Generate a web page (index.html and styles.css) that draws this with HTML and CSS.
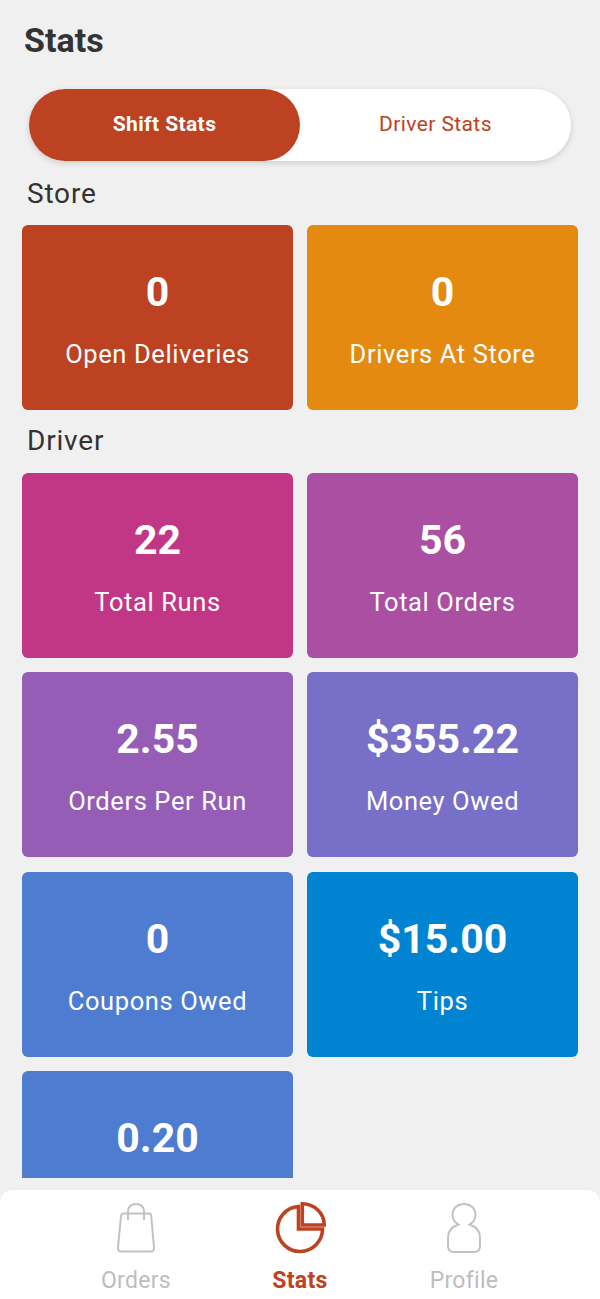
FILE: index.html
```html
<!DOCTYPE html>
<html lang="en">

<head>
    <meta charset="UTF-8">
    <meta name="viewport" content="width=device-width, initial-scale=1.0">
    <title>Stats</title>
    <link rel="stylesheet" href="styles.css">
</head>

<body>
    <main class="content">
        <h1 class="page-title">Stats</h1>

        <div class="toggle">
            <button class="toggle-btn active">Shift Stats</button>
            <button class="toggle-btn">Driver Stats</button>
        </div>

        <h2 class="section-title">Store</h2>
        <div class="tiles">
            <div class="tile tile-red">
                <div class="tile-value">0</div>
                <div class="tile-label">Open Deliveries</div>
            </div>
            <div class="tile tile-orange">
                <div class="tile-value">0</div>
                <div class="tile-label">Drivers At Store</div>
            </div>
        </div>

        <h2 class="section-title section-driver">Driver</h2>
        <div class="tiles">
            <div class="tile tile-pink">
                <div class="tile-value">22</div>
                <div class="tile-label">Total Runs</div>
            </div>
            <div class="tile tile-magenta">
                <div class="tile-value">56</div>
                <div class="tile-label">Total Orders</div>
            </div>
            <div class="tile tile-purple">
                <div class="tile-value">2.55</div>
                <div class="tile-label">Orders Per Run</div>
            </div>
            <div class="tile tile-violet">
                <div class="tile-value">$355.22</div>
                <div class="tile-label">Money Owed</div>
            </div>
            <div class="tile tile-blue">
                <div class="tile-value">0</div>
                <div class="tile-label">Coupons Owed</div>
            </div>
            <div class="tile tile-sky">
                <div class="tile-value">$15.00</div>
                <div class="tile-label">Tips</div>
            </div>
            <div class="tile tile-blue">
                <div class="tile-value">0.20</div>
            </div>
        </div>
    </main>

    <nav class="tabbar">
        <div class="tab">
            <svg class="tab-icon" width="40" height="52" viewBox="0 0 40 52" fill="none" stroke="#c2c2c2" stroke-width="2">
                <path d="M8 11.5H33Q35 11.5 35.2 14L38 45.5Q38.3 49.5 34.5 49.5H5.5Q1.7 49.5 2 45.5L5 14Q5.2 11.5 8 11.5Z" />
                <path d="M12 18V10C12 5 15 2 20 2C25 2 28 5 28 10V18" />
            </svg>
            <span class="tab-label">Orders</span>
        </div>
        <div class="tab active">
            <svg class="tab-icon" width="52" height="52" viewBox="0 0 52 52" fill="none" stroke="#bc4221" stroke-width="3.6">
                <path d="M24.5 4.500A22.500 22.500 0 1 0 48.500 27H24.500Z" />
                <path d="M28.300 1.800A22 21 0 0 1 50.200 23H28.300Z" />
            </svg>
            <span class="tab-label">Stats</span>
        </div>
        <div class="tab">
            <svg class="tab-icon" width="36" height="52" viewBox="0 0 36 52" fill="none" stroke="#c2c2c2" stroke-width="2">
                <path d="M12.500 22.500C8 20 6.500 16.500 6.500 13C6.500 6.500 11.500 2 18 2C24.500 2 29.500 6.500 29.500 13C29.500 16.500 28 20 23.500 22.500C30 24.500 34 29.500 34 36V44Q34 50 28 50H8Q2 50 2 44V36C2 29.500 6 24.500 12.500 22.500Z" />
            </svg>
            <span class="tab-label">Profile</span>
        </div>
    </nav>
</body>

</html>
```

FILE: styles.css
```css
/* General */
* {
    box-sizing: border-box;
}

body {
    margin: 0;
    height: 1299px;
    display: flex;
    flex-direction: column;
    font-family: Roboto, Arial, sans-serif;
    background-color: #f0f0f0;
    color: #333;
    overflow: hidden;
}

.content {
    height: 1178px;
    flex-shrink: 0;
    overflow: hidden;
    padding: 0 22px;
}

.page-title {
    margin: 0;
    padding: 20px 2px 1px;
    font-size: 34px;
    line-height: 40px;
    font-weight: 700;
}

/* Toggle */
.toggle {
    display: flex;
    margin: 28px 7px 0;
    height: 72px;
    border-radius: 36px;
    background-color: #fff;
    box-shadow: 0 2px 6px rgba(0, 0, 0, 0.15);
}

.toggle-btn {
    flex: 1;
    border: none;
    background: none;
    font-family: inherit;
    font-size: 21px;
    letter-spacing: 0.4px;
    color: #bc4221;
    border-radius: 36px;
    padding: 0 0 3px;
}

.toggle-btn.active {
    background-color: #bc4221;
    color: #fff;
    font-weight: 700;
}

.section-title {
    margin: 0;
    padding: 17px 5px 15px;
    font-size: 28px;
    line-height: 32px;
    letter-spacing: 0.8px;
    font-weight: 400;
}

.section-driver {
    padding: 15px 5px 15.9px;
}

/* Tiles */
.tiles {
    display: grid;
    grid-template-columns: 271px 271px;
    column-gap: 14px;
    row-gap: 14.5px;
}

.tile {
    height: 185px;
    border-radius: 6px;
    color: #fff;
    text-align: center;
    padding-top: 44px;
}

.tile-value {
    font-size: 41px;
    line-height: 46px;
    font-weight: 700;
}

.tile-label {
    margin-top: 24px;
    font-size: 25.5px;
    line-height: 30px;
    letter-spacing: 0.6px;
}

.tile-red {
    background-color: #bc4221;
}

.tile-orange {
    background-color: #e58a10;
}

.tile-pink {
    background-color: #c13786;
}

.tile-magenta {
    background-color: #ab4fa3;
}

.tile-purple {
    background-color: #955db6;
}

.tile-violet {
    background-color: #776fc8;
}

.tile-blue {
    background-color: #4d7cd0;
}

.tile-sky {
    background-color: #0084d1;
}

/* Bottom bar */
.tabbar {
    margin-top: 12px;
    height: 109px;
    flex-shrink: 0;
    display: flex;
    justify-content: center;
    background-color: #fff;
    border-radius: 12px 12px 0 0;
    box-shadow: 0 -1px 1px rgba(0, 0, 0, 0.02);
}

.tab {
    width: 164px;
    height: 100%;
    display: flex;
    flex-direction: column;
    align-items: center;
    padding-top: 12px;
    color: #bdbdbd;
}

.tab-icon {
    display: block;
}

.tab-label {
    margin-top: 13px;
    font-size: 23px;
    line-height: 28px;
    letter-spacing: 0.3px;
}

.tab.active {
    color: #bc4221;
    font-weight: 700;
}
```
